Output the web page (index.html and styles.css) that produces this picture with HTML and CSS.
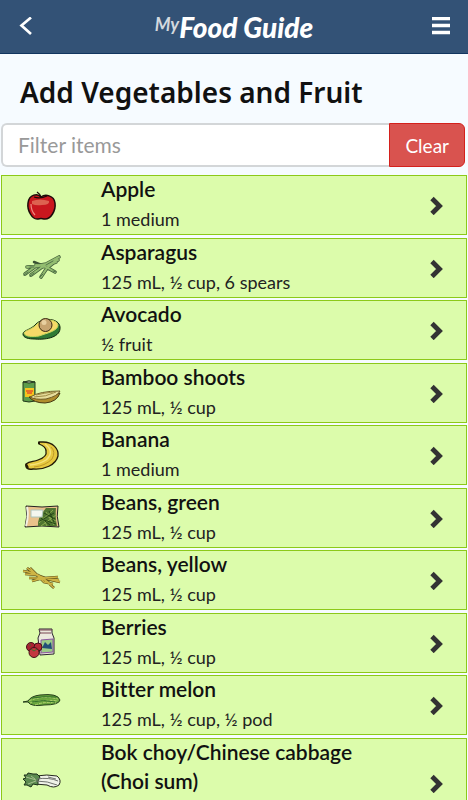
FILE: index.html
```html
<!DOCTYPE html>
<html lang="en">
<head>
    <meta charset="UTF-8">
    <meta name="viewport" content="width=device-width, initial-scale=1.0">
    <title>My Food Guide</title>
    <link rel="stylesheet" href="styles.css">
</head>

<body>
    <header class="navbar">
        <button class="nav-button" aria-label="Back">
            <svg width="14" height="20" viewBox="0 0 14 20"><path d="M12 0.500 L2.500 8.500 L12 17" fill="none" stroke="#fff" stroke-width="2.700"/></svg>
        </button>
        <a class="brand" href="#"><span class="brand-my">My</span><span class="brand-name">Food Guide</span></a>
        <button class="nav-button nav-menu" aria-label="Menu">
            <svg width="18" height="20" viewBox="0 0 18 20"><path d="M0 1.500H18M0 8.500H18M0 15.500H18" stroke="#fff" stroke-width="3.600"/></svg>
        </button>
    </header>

    <main>
        <h1>Add Vegetables and Fruit</h1>

        <form class="filter">
            <input type="text" class="filter-input" placeholder="Filter items" aria-label="Filter items">
            <button type="reset" class="filter-clear">Clear</button>
        </form>

        <ul class="food-list">
            <li><a class="food" href="#">
                <svg class="food-icon" viewBox="0 0 40 40">
                    <path d="M19 12C16 8 7 9 6 18C5 25 10 35 16 34Q19 33 22 34C29 35 34 25 33 18C32 10 23 9 19 12Z" fill="#c9171e" stroke="#1b0a0a" stroke-width="1.500"/>
                    <path d="M10 16Q18 13 27 16Q28 20 20 20Q14 21 10 19Z" fill="#dd6250"/>
                    <path d="M9 19Q9 26 13 30" fill="none" stroke="#f08a80" stroke-width="1.200"/>
                    <path d="M19 12Q18 9 15 7M12 12Q18 14 25 11" fill="none" stroke="#1b0a0a" stroke-width="1.300"/>
                </svg>
                <span class="food-text"><strong>Apple</strong><span>1 medium</span></span>
                <svg class="food-arrow" viewBox="0 0 14 20"><path d="M2 3.500L9.500 11L2 18.500" fill="none" stroke="#333" stroke-width="4.800"/></svg>
            </a></li>
            <li><a class="food" href="#">
                <svg class="food-icon" viewBox="0 0 40 40" stroke-linecap="round">
                    <path d="M12 14L22 18L35 11" fill="none" stroke="#3a5233" stroke-width="2.500"/>
                    <path d="M3 26L14 18L24 16L37 9M5 19L20 18L36 12M9 27L20 19L34 14M19 29L25 20L35 12M33 24L24 19L14 17" fill="none" stroke="#46643d" stroke-width="3.600"/>
                    <path d="M3 26L14 18L24 16L37 9M5 19L20 18L36 12M9 27L20 19L34 14M19 29L25 20L35 12M33 24L24 19L14 17" fill="none" stroke="#93bd70" stroke-width="2"/>
                    <path d="M2 27L6 24M8 28L12 25M18 29L21 26M31 23L34 24M8 19L12 19M24 17L31 13M15 21L18 19" stroke="#52734a"/>
                </svg>
                <span class="food-text"><strong>Asparagus</strong><span>125 mL, ½ cup, 6 spears</span></span>
                <svg class="food-arrow" viewBox="0 0 14 20"><path d="M2 3.500L9.500 11L2 18.500" fill="none" stroke="#333" stroke-width="4.800"/></svg>
            </a></li>
            <li><a class="food" href="#">
                <svg class="food-icon" viewBox="0 0 40 40">
                    <path d="M1 24C1 20 9 20 14 14C21 7 37 8 38 17C39 27 25 30 13 29C7 29 1 28 1 24Z" fill="#2f7a35" stroke="#10240f"/>
                    <path d="M2 23C3 20 10 20 15 14C22 8 35 9 36 15C36 21 25 23 17 26C11 27 3 27 2 23Z" fill="#f6da68" stroke="#c7d65a"/>
                    <circle cx="23.500" cy="15" r="6.500" fill="#c7a470" stroke="#382912"/>
                    <circle cx="22" cy="12.500" r="2.500" fill="#e8cf9f"/>
                </svg>
                <span class="food-text"><strong>Avocado</strong><span>½ fruit</span></span>
                <svg class="food-arrow" viewBox="0 0 14 20"><path d="M2 3.500L9.500 11L2 18.500" fill="none" stroke="#333" stroke-width="4.800"/></svg>
            </a></li>
            <li><a class="food" href="#">
                <svg class="food-icon" viewBox="0 0 40 40">
                    <path d="M1 9Q7 7 13 9V28Q7 30 1 28Z" fill="#5c9c4a" stroke="#223a1c"/>
                    <path d="M1 9Q7 7 13 9Q7 11 1 9Z" fill="#dfe3d0" stroke="#223a1c"/>
                    <path d="M3 15H12V24H3Z" fill="#f6c51d"/>
                    <path d="M4 18H11M5 20H10" stroke="#e5542b" stroke-width="1.500"/>
                    <path d="M7 24Q22 26 38 20Q35 29 23 30Q12 30 7 24Z" fill="#b08d2c" stroke="#453711"/>
                    <path d="M8 24Q18 18 38 18Q36 23 24 26Q13 27 8 24Z" fill="#e6dd9c" stroke="#6c5b25"/>
                    <path d="M12 24Q24 24 34 19M14 22Q22 20 31 19" fill="none" stroke="#9c8a42"/>
                </svg>
                <span class="food-text"><strong>Bamboo shoots</strong><span>125 mL, ½ cup</span></span>
                <svg class="food-arrow" viewBox="0 0 14 20"><path d="M2 3.500L9.500 11L2 18.500" fill="none" stroke="#333" stroke-width="4.800"/></svg>
            </a></li>
            <li><a class="food" href="#">
                <svg class="food-icon" viewBox="0 0 40 40">
                    <path d="M17 7L21 7C31 7 37 14 36 21C34 30 22 35 11 34C6 35 3 33 4 29C8 26 12 27 16 25C22 23 25 20 24 16C24 12 20 10 17 9Z" fill="#e6c93f" stroke="#231b08" stroke-width="1.300"/>
                    <path d="M23 9C30 14 30 20 24 25Q18 29 8 30" fill="none" stroke="#f5e37c" stroke-width="1.500"/>
                    <path d="M29 12Q34 17 30 24Q23 31 12 32" fill="none" stroke="#c09a27"/>
                    <path d="M4 29L6 33M17 7V9" stroke="#231b08" stroke-width="2"/>
                </svg>
                <span class="food-text"><strong>Banana</strong><span>1 medium</span></span>
                <svg class="food-arrow" viewBox="0 0 14 20"><path d="M2 3.500L9.500 11L2 18.500" fill="none" stroke="#333" stroke-width="4.800"/></svg>
            </a></li>
            <li><a class="food" href="#">
                <svg class="food-icon" viewBox="0 0 40 40">
                    <path d="M4 8L20 9L36 8Q34 18 37 29L20 28L3 29Q6 18 4 8Z" fill="#e9c28b" stroke="#222" stroke-width="1"/>
                    <path d="M5 9Q7 18 4 28" fill="none" stroke="#f2f0e4" stroke-width="2"/>
                    <path d="M24 10L34 10Q33 18 35 28L16 28Q15 20 24 10Z" fill="#4f7530"/>
                    <path d="M17 25L31 12M19 28L34 17M25 28L20 18M32 27L24 14M34 23L25 18" stroke="#8aab4f"/>
                    <path d="M22 22L34 26M27 13L32 24M19 20L28 27M22 15L33 21M18 23L32 15" stroke="#264717"/>
                    <path d="M9 12H21L20 19H9Z" fill="#f4f7ef" stroke="#aec6bb"/>
                </svg>
                <span class="food-text"><strong>Beans, green</strong><span>125 mL, ½ cup</span></span>
                <svg class="food-arrow" viewBox="0 0 14 20"><path d="M2 3.500L9.500 11L2 18.500" fill="none" stroke="#333" stroke-width="4.800"/></svg>
            </a></li>
            <li><a class="food" href="#">
                <svg class="food-icon" viewBox="0 0 40 40" fill="none">
                    <path d="M1 11Q15 12 32 28M5 8Q16 18 38 22M8 8L22 22L31 24M7 18L22 18L36 17M10 21L21 18L37 20M3 14L16 15L29 24" stroke="#5d4d17" stroke-width="2.600"/>
                    <path d="M1 11Q15 12 32 28M5 8Q16 18 38 22M8 8L22 22L31 24M7 18L22 18L36 17M10 21L21 18L37 20M3 14L16 15L29 24" stroke="#cfb545" stroke-width="1.400"/>
                </svg>
                <span class="food-text"><strong>Beans, yellow</strong><span>125 mL, ½ cup</span></span>
                <svg class="food-arrow" viewBox="0 0 14 20"><path d="M2 3.500L9.500 11L2 18.500" fill="none" stroke="#333" stroke-width="4.800"/></svg>
            </a></li>
            <li><a class="food" href="#">
                <svg class="food-icon" viewBox="0 0 40 40">
                    <path d="M17 6H30L30 10L32 15V31L18 32L16 15L18 10Z" fill="#ece9dd" stroke="#2c2530"/>
                    <path d="M17 7H30M18 10H29" stroke="#7a4652"/>
                    <path d="M19 17L31 16V29L19 30Z" fill="#9ccc87" stroke="#8c55a0"/>
                    <path d="M20 25L23 19L26 22L29 19L30 26Z" fill="#214e78"/>
                    <circle cx="9" cy="24" r="4.500" fill="#ab2432" stroke="#431318"/>
                    <circle cx="16" cy="24" r="4" fill="#b52b37" stroke="#431318"/>
                    <circle cx="12" cy="29.500" r="5" fill="#c33840" stroke="#431318"/>
                    <path d="M9 26L12 28L15 26M7 22H9" stroke="#426d2e" fill="none"/>
                </svg>
                <span class="food-text"><strong>Berries</strong><span>125 mL, ½ cup</span></span>
                <svg class="food-arrow" viewBox="0 0 14 20"><path d="M2 3.500L9.500 11L2 18.500" fill="none" stroke="#333" stroke-width="4.800"/></svg>
            </a></li>
            <li><a class="food" href="#">
                <svg class="food-icon" viewBox="0 0 40 40">
                    <path d="M1 17L6 16Q9 11 18 10Q36 8 38 15Q37 20 22 20Q9 22 6 17L1 17Z" fill="#69a63d" stroke="#263f1d"/>
                    <path d="M7 16Q20 10 36 14M8 18Q20 14 36 16M13 20Q24 16 34 18" fill="none" stroke="#b3d36e" stroke-dasharray="3 1"/>
                    <path d="M10 13Q22 11 34 12M10 17Q22 14 33 17" fill="none" stroke="#33702b"/>
                </svg>
                <span class="food-text"><strong>Bitter melon</strong><span>125 mL, ½ cup, ½ pod</span></span>
                <svg class="food-arrow" viewBox="0 0 14 20"><path d="M2 3.500L9.500 11L2 18.500" fill="none" stroke="#333" stroke-width="4.800"/></svg>
            </a></li>
            <li><a class="food" href="#">
                <svg class="food-icon" viewBox="0 0 40 40">
                    <path d="M14 13Q25 11 35 13Q40 17 37 22Q32 26 25 22L13 21Z" fill="#eff2e8" stroke="#25271f"/>
                    <path d="M2 12L5 12L6 10L11 11L15 11L18 14L16 18L16 22L11 21L9 24L5 22L2 22L4 19L1 16L4 15Z" fill="#5c8b50" stroke="#1c311a"/>
                    <path d="M15 16Q27 14 36 18M14 18Q26 18 35 22M26 14L34 16" fill="none" stroke="#6f726e"/>
                    <path d="M4 14L14 17M6 21L14 18M9 13L13 16" stroke="#a5c08d"/>
                </svg>
                <span class="food-text"><strong>Bok choy/Chinese cabbage (Choi sum)</strong><span>&nbsp;</span></span>
                <svg class="food-arrow" viewBox="0 0 14 20"><path d="M2 3.500L9.500 11L2 18.500" fill="none" stroke="#333" stroke-width="4.800"/></svg>
            </a></li>
        </ul>
    </main>
</body>
</html>
```

FILE: styles.css
```css
* {
    box-sizing: border-box;
}

body {
    margin: 0;
    font-family: Lato, "Liberation Sans", sans-serif;
    font-size: 18px;
    font-variant-ligatures: none;
    color: #222;
    background-color: #f6fbff;
}

.navbar {
    display: flex;
    align-items: center;
    justify-content: space-between;
    height: 54px;
    padding: 0 17px;
    background-color: #335276;
    border-bottom: 1px solid #12355f;
}

.nav-button {
    display: flex;
    width: 36px;
    padding: 0 2px;
    border: none;
    background: none;
    cursor: pointer;
}

.nav-menu {
    justify-content: flex-end;
    padding: 0 1px;
}

.brand {
    display: flex;
    align-items: flex-start;
    font-family: Lato, "Open Sans", sans-serif;
    font-style: italic;
    font-weight: 900;
    color: #fff;
    text-decoration: none;
}

.brand-my {
    font-size: 18px;
    font-weight: bold;
    line-height: 28px;
    color: #d3d8de;
}

.brand-name {
    font-size: 28px;
    line-height: 34px;
}

h1 {
    margin: 0;
    padding: 18px 20px 10px;
    font-family: "Noto Sans", "Open Sans", sans-serif;
    font-size: 28px;
    font-weight: 600;
    line-height: 41px;
    color: #111;
}

.filter {
    display: flex;
    height: 44px;
    margin: 0 3px 8px 1px;
}

.filter-input {
    flex: 1;
    min-width: 0;
    padding: 0 15px 2px;
    border: 2px solid #d3d6d8;
    border-right: none;
    border-radius: 6px 0 0 6px;
    font-family: inherit;
    font-size: 21px;
    background-color: #fff;
}

.filter-input::placeholder {
    color: #999;
}

.filter-clear {
    padding: 0 15px;
    border: 1px solid #d4201c;
    border-radius: 0 6px 6px 0;
    font-family: inherit;
    font-size: 19px;
    color: #fff;
    background-color: #d9534f;
    cursor: pointer;
}

.food-list {
    margin: 0 1px;
    padding: 0;
    list-style: none;
}

.food-list li {
    margin-bottom: 2px;
}

.food-list li:nth-child(odd) {
    margin-bottom: 3px;
}

.food {
    display: flex;
    align-items: center;
    padding: 0 22px 0 20px;
    border: 1px solid #8cc919;
    color: inherit;
    text-decoration: none;
    background-color: #dcfcab;
}

.food-icon {
    flex: none;
    width: 40px;
    height: 40px;
}

.food-text {
    flex: 1;
    padding: 0 60px 0 39px;
    line-height: 29px;
}

.food-text strong,
.food-text span {
    display: block;
}

.food-text strong {
    margin: -2px 0 2px;
    font-size: 21px;
    font-weight: 600;
    color: #111;
}

.food-arrow {
    flex: none;
    width: 14px;
    height: 20px;
}
```
